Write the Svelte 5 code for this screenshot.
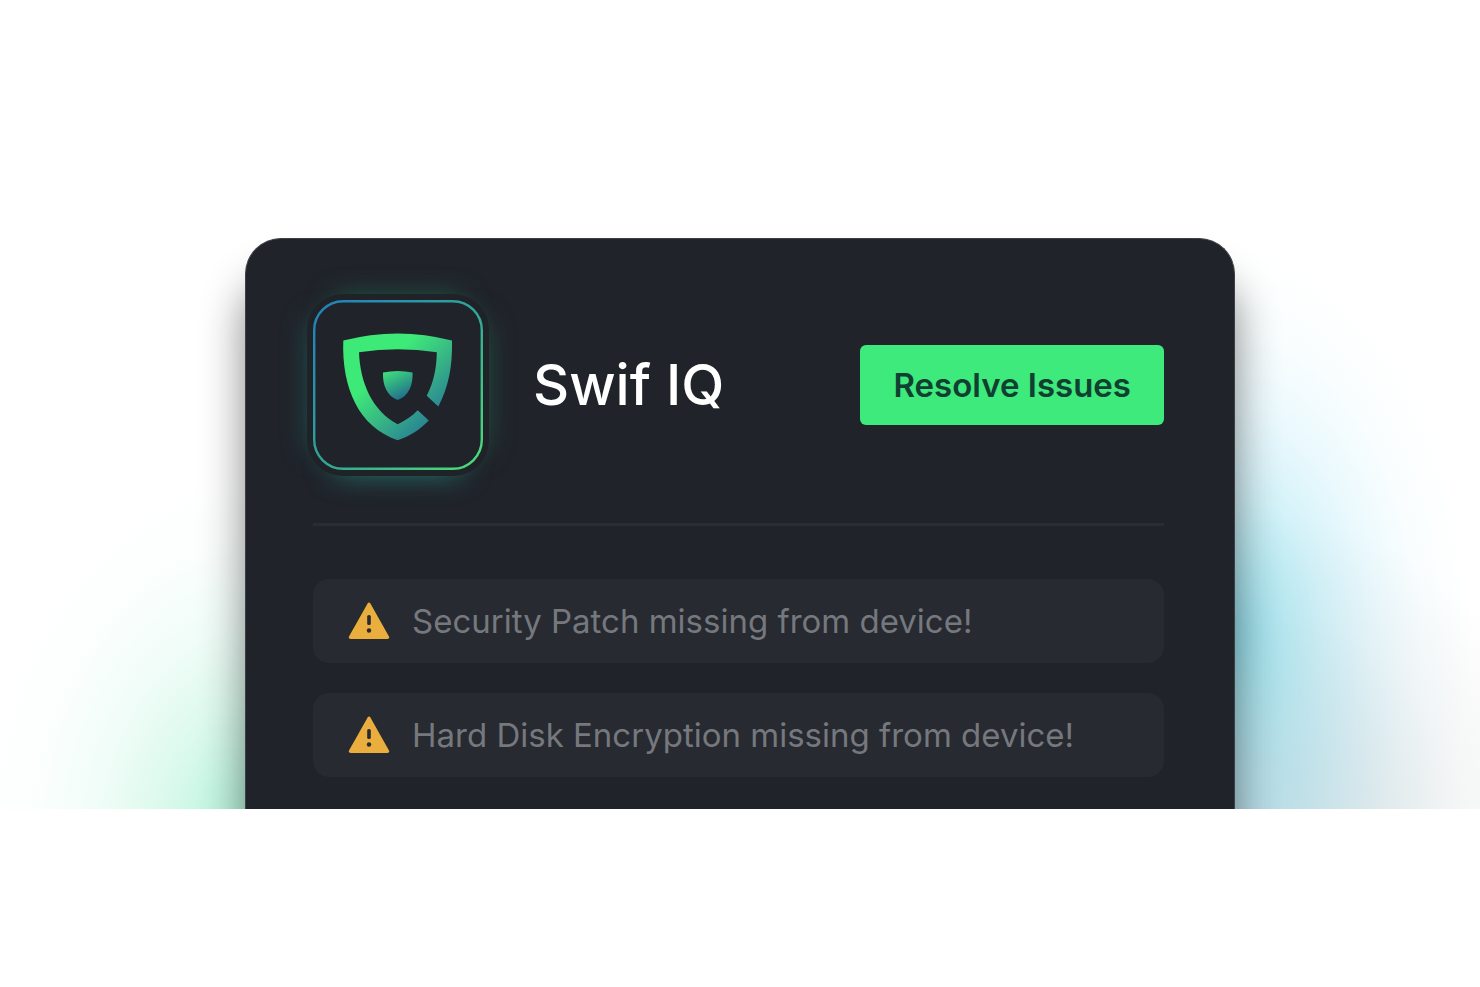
<script>
  const issues = [
    'Security Patch missing from device!',
    'Hard Disk Encryption missing from device!',
  ];
</script>

<main class="stage">
  <section class="card" aria-labelledby="card-title">
    <header class="head">
      <div class="tile">
        <svg viewBox="0 0 170 170" aria-hidden="true">
          <defs>
            <linearGradient id="frame" x1="0" y1="0" x2="1" y2="1">
              <stop offset="0.08" stop-color="#2484b8" />
              <stop offset="0.5" stop-color="#30a597" />
              <stop offset="0.94" stop-color="#48d97c" />
            </linearGradient>
            <linearGradient id="shield" gradientUnits="userSpaceOnUse" x1="52" y1="48" x2="126" y2="122">
              <stop offset="0.25" stop-color="#3dea78" />
              <stop offset="0.58" stop-color="#38b884" />
              <stop offset="1" stop-color="#267a96" />
            </linearGradient>
            <linearGradient id="core" gradientUnits="userSpaceOnUse" x1="76" y1="70" x2="90" y2="98">
              <stop offset="0" stop-color="#3fe07c" />
              <stop offset="1" stop-color="#216f8c" />
            </linearGradient>
          </defs>
          <rect x="1.200" y="1.200" width="167.600" height="167.600" rx="29" fill="#20232a" stroke="url(#frame)" stroke-width="2.400" />
          <path
            fill="url(#shield)"
            d="M30.3 40.6Q84.7 26.4 139 40.6C139.600 66 135.500 88 125.300 106.400L113.700 95.700C120.500 83 123.700 68 123.800 52.300Q84.700 46.300 46 52.300C47 82 59 111 84.700 124.200C92.500 120.600 99 116 104.700 110.200L115.800 120.400C107 129.500 97 136 84.700 140.200C46 127.500 28.500 88 30.300 40.600Z"
          />
          <path fill="url(#core)" d="M70 72.500Q84.700 69.300 99.600 72.500C100 86 95.500 96 84.700 100C74 96 69.600 86 70 72.500Z" />
        </svg>
      </div>
      <h1 id="card-title">Swif IQ</h1>
      <button type="button">Resolve Issues</button>
    </header>

    <ul class="issues">
      {#each issues as issue}
        <li>
          <svg class="warn" viewBox="0 0 42 38" aria-hidden="true">
            <path
              d="M19.600 1.500Q21 -0.500 22.400 1.500L41 34.500Q41.800 37 39.400 37H2.600Q0.200 37 1 34.500Z"
              fill="#e9ae3d"
            />
            <rect x="19.200" y="13" width="3.600" height="10" rx="1.600" fill="#272a30" />
            <circle cx="21" cy="28.500" r="2.200" fill="#272a30" />
          </svg>
          <span>{issue}</span>
        </li>
      {/each}
    </ul>
  </section>
</main>

<style>
  :global(body) {
    margin: 0;
    background: #fff;
    font-family: Inter, 'Liberation Sans', sans-serif;
  }

  .stage {
    display: flex;
    justify-content: center;
    padding: 238px 16px 0;
    margin-bottom: 178px;
    overflow: hidden;
    background:
      radial-gradient(
        ellipse 290px 380px at 270px 105%,
        rgb(160 240 208 / 85%) 0%,
        rgb(160 240 208 / 66%) 20%,
        rgb(160 240 208 / 36%) 40%,
        rgb(160 240 208 / 16%) 60%,
        rgb(160 240 208 / 5%) 80%,
        rgb(160 240 208 / 0%) 100%
      ),
      radial-gradient(
        ellipse 240px 380px at calc(100% - 250px) 78%,
        rgb(110 212 230 / 70%) 0%,
        rgb(120 216 232 / 54%) 18%,
        rgb(130 218 238 / 34%) 38%,
        rgb(140 222 245 / 18%) 58%,
        rgb(150 228 250 / 6%) 78%,
        rgb(150 228 250 / 0%) 100%
      ),
      radial-gradient(
        ellipse 330px 320px at calc(100% - 250px) 102%,
        rgb(120 170 185 / 44%) 0%,
        rgb(130 172 184 / 36%) 25%,
        rgb(145 172 178 / 24%) 48%,
        rgb(160 170 174 / 11%) 70%,
        rgb(160 170 174 / 0%) 100%
      );
  }

  .card {
    box-sizing: border-box;
    width: 100%;
    max-width: 990px;
    padding: 61px 70px 32px 67px;
    border: 1px solid #3c4244;
    border-width: 1px 1px 0;
    border-radius: 36px 36px 0 0;
    background: #20232a;
    box-shadow: 0 44px 44px 0 rgb(0 0 0 / 48%);
  }

  .head {
    display: flex;
    align-items: center;
    padding-bottom: 53px;
    border-bottom: 3px solid #292c32;
  }

  .tile {
    width: 170px;
    height: 170px;
    flex: none;
    border-radius: 30px;
    box-shadow:
      0 0 0 6px #1f2328,
      0 24px 28px -20px #267a72,
      0 -22px 28px -20px #25614c,
      -22px 0 28px -20px #225c59,
      22px 0 28px -20px #265a49;
  }

  .tile svg {
    display: block;
    width: 100%;
  }

  h1 {
    flex: 1;
    margin: 0 0 0 50px;
    color: #fff;
    font-size: 56px;
    font-weight: 500;
    line-height: 72px;
  }

  button {
    height: 80px;
    padding: 0 33px;
    border: 0;
    border-radius: 6px;
    background: #3dea7b;
    color: #113f31;
    font: 600 33px/40px Inter, 'Liberation Sans', sans-serif;
  }

  .issues {
    display: grid;
    gap: 30px;
    margin: 53px 0 0;
    padding: 0;
    list-style: none;
  }

  li {
    display: flex;
    align-items: center;
    gap: 22px;
    min-height: 84px;
    padding: 0 35px;
    border-radius: 16px;
    background: #272a30;
    color: #75787d;
    font-size: 33px;
    line-height: 44px;
    box-sizing: border-box;
  }

  .warn {
    width: 42px;
    height: 38px;
    flex: none;
  }
</style>
